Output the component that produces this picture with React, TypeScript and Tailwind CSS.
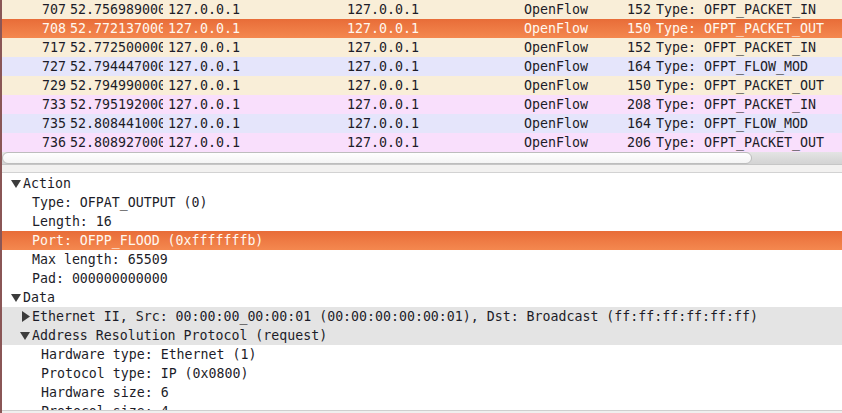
import React from 'react';

const packets = [
  { no: '707', time: '52.756989000', len: '152', info: 'Type: OFPT_PACKET_IN', bg: 'bg-[#f9eed8]' },
  { no: '708', time: '52.772137000', len: '150', info: 'Type: OFPT_PACKET_OUT', bg: 'sel' },
  { no: '717', time: '52.772500000', len: '152', info: 'Type: OFPT_PACKET_IN', bg: 'bg-[#f9eed8]' },
  { no: '727', time: '52.794447000', len: '164', info: 'Type: OFPT_FLOW_MOD', bg: 'bg-[#e5e5fb]' },
  { no: '729', time: '52.794990000', len: '150', info: 'Type: OFPT_PACKET_OUT', bg: 'bg-[#f9eed8]' },
  { no: '733', time: '52.795192000', len: '208', info: 'Type: OFPT_PACKET_IN', bg: 'bg-[#f9dffc]' },
  { no: '735', time: '52.808441000', len: '164', info: 'Type: OFPT_FLOW_MOD', bg: 'bg-[#e5e5fb]' },
  { no: '736', time: '52.808927000', len: '206', info: 'Type: OFPT_PACKET_OUT', bg: 'bg-[#f9dffc]' },
];

// tree rows: pl = where the row content starts, arrow = 'down' | 'right'
const tree = [
  { text: 'Action', pl: 'pl-[9px]', arrow: 'down' },
  { text: 'Type: OFPAT_OUTPUT (0)', pl: 'pl-[30px]' },
  { text: 'Length: 16', pl: 'pl-[30px]' },
  { text: 'Port: OFPP_FLOOD (0xfffffffb)', pl: 'pl-[30px]', sel: true },
  { text: 'Max length: 65509', pl: 'pl-[30px]' },
  { text: 'Pad: 000000000000', pl: 'pl-[30px]' },
  { text: 'Data', pl: 'pl-[9px]', arrow: 'down' },
  { text: 'Ethernet II, Src: 00:00:00_00:00:01 (00:00:00:00:00:01), Dst: Broadcast (ff:ff:ff:ff:ff:ff)', pl: 'pl-[20px]', arrow: 'right', grey: true },
  { text: 'Address Resolution Protocol (request)', pl: 'pl-[18px]', arrow: 'down', grey: true },
  { text: 'Hardware type: Ethernet (1)', pl: 'pl-[39px]' },
  { text: 'Protocol type: IP (0x0800)', pl: 'pl-[39px]' },
  { text: 'Hardware size: 6', pl: 'pl-[39px]' },
  { text: 'Protocol size: 4', pl: 'pl-[39px]' },
];

function Arrow({ dir }: { dir: string }) {
  if (dir === 'right') {
    return (
      <svg width="8" height="11" viewBox="0 0 8 11" className="mr-[2px] shrink-0">
        <polygon points="0,0 8,5.5 0,11" fill="#3c3c3c" />
      </svg>
    );
  }
  return (
    <svg width="10" height="8" viewBox="0 0 10 8" className="mr-[2px] shrink-0">
      <polygon points="0,0 10,0 5,8" fill="#3c3c3c" />
    </svg>
  );
}

export default function App() {
  return (
    <div className="w-[842px] h-[413px] overflow-hidden bg-[#f2f1f0] flex flex-col border-l-2 border-[#8a5656] leading-[19px] text-[#1c1c28] font-['DejaVu_Sans_Mono',monospace]">
      {/* packet list */}
      <div className="flex flex-col bg-white text-[13.3px]">
        {packets.map((p) => {
          const sel = p.bg === 'sel';
          return (
            <div
              key={p.no}
              className={`flex h-[19px] whitespace-pre ${sel ? 'bg-gradient-to-b from-[#e86c38] to-[#f4884f] text-[#fff8f0]' : p.bg}`}
            >
              <div className="w-[66px] shrink-0 text-right pr-[2px]">{p.no}</div>
              <div className="w-[95px] shrink-0 overflow-hidden pl-[2px]">{p.time}</div>
              <div className="w-[182px] shrink-0 pl-[5px]">127.0.0.1</div>
              <div className="w-[177px] shrink-0 pl-[2px]">127.0.0.1</div>
              <div className="w-[98px] shrink-0 pl-[2px]">OpenFlow</div>
              <div className="w-[33px] shrink-0 text-right pr-[2px]">{p.len}</div>
              <div className="pl-[3px]">{p.info}</div>
            </div>
          );
        })}
      </div>

      {/* horizontal scrollbar */}
      <div className="h-[13px] flex bg-gradient-to-b from-[#e4e4e4] to-[#d3d3d3] border-b border-[#c6c6c6]">
        <div className="w-[750px] h-[12px] bg-gradient-to-b from-white to-[#f4f4f4] border border-[#bdbdbd] rounded-[6px]" />
      </div>
      <div className="h-[7px]" />

      {/* packet details */}
      <div className="flex-1 bg-white border-t border-[#d2d2d2] pt-[1px] flex flex-col overflow-hidden text-[13.25px]">
        {tree.map((r, i) => (
          <div
            key={i}
            className={`h-[19px] shrink-0 flex items-center whitespace-pre ${r.pl} ${
              r.sel
                ? 'bg-gradient-to-b from-[#e86c38] to-[#f4884f] text-[#fff8f0]'
                : r.grey
                ? 'bg-[#e4e4e4]'
                : ''
            }`}
          >
            {r.arrow && <Arrow dir={r.arrow} />}
            <span>{r.text}</span>
          </div>
        ))}
      </div>
      <div className="h-[3px] border-t border-[#cfcfcf] bg-[#f0efee]" />
    </div>
  );
}
